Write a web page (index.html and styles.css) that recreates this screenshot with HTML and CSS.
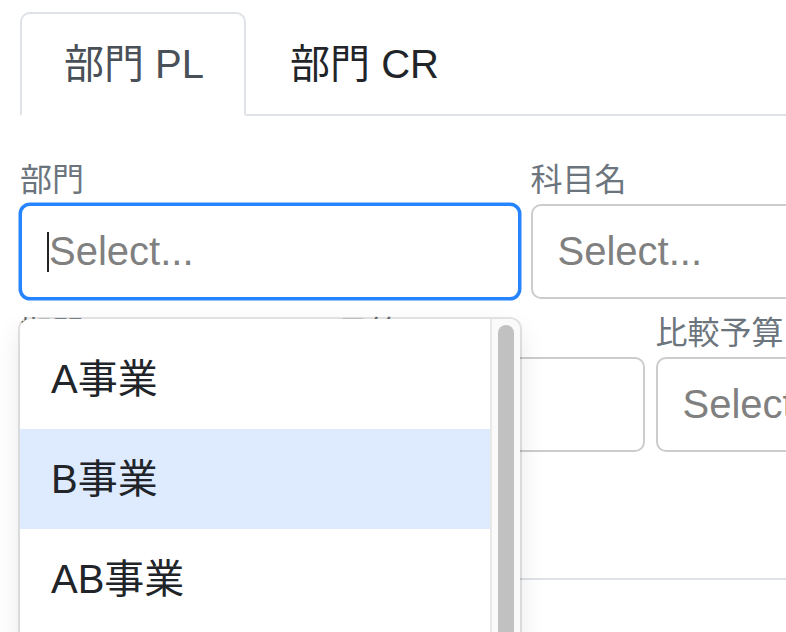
FILE: index.html
```html
<!DOCTYPE html>
<html lang="ja">
<head>
<meta charset="utf-8">
<title>部門 PL</title>
<link rel="stylesheet" href="styles.css">
</head>
<body>
<div class="page">
  <ul class="tabs">
    <li class="tab active">部門 PL</li>
    <li class="tab">部門 CR</li>
  </ul>
  <div class="form">
    <div class="row row1">
      <div class="field wide">
        <label class="label">部門</label>
        <div class="control focused"><span class="caret"></span><span class="ph">Select...</span></div>
        <div class="menu">
          <div class="menu-list">
            <div class="option">A事業</div>
            <div class="option hl">B事業</div>
            <div class="option">AB事業</div>
          </div>
          <div class="scroll"><div class="thumb"></div></div>
        </div>
      </div>
      <div class="field wide">
        <label class="label">科目名</label>
        <div class="control"><span class="ph">Select...</span></div>
      </div>
    </div>
    <div class="row row2">
      <div class="field narrow">
        <label class="label">期間</label>
        <div class="control"><span class="ph">Select...</span></div>
      </div>
      <div class="field narrow">
        <label class="label">予算</label>
        <div class="control"><span class="ph"></span></div>
      </div>
      <div class="field narrow">
        <label class="label">比較予算</label>
        <div class="control"><span class="ph">Select...</span></div>
      </div>
    </div>
    <div class="divider"></div>
  </div>
</div>
</body>
</html>
```
FILE: styles.css
```css
html, body {
  margin: 0;
  padding: 0;
  background: #ffffff;
}
body {
  font-family: "Liberation Sans", "Noto Sans CJK JP", sans-serif;
  color: #212529;
  overflow: hidden;
}
.page {
  width: 786px;
  height: 632px;
  overflow: hidden;
  padding: 12px 0 0 20px;
  box-sizing: border-box;
}
.tabs {
  list-style: none;
  margin: 0;
  padding: 0;
  display: flex;
  border-bottom: 2px solid #dee2e6;
  width: 1000px;
}
.tab {
  font-size: 40px;
  line-height: 60px;
  padding: 20px 40px 20px 42px;
  border: 2px solid transparent;
  border-top-left-radius: 10px;
  border-top-right-radius: 10px;
  margin-bottom: -2px;
  color: #212529;
}
.tab.active {
  color: #495057;
  border-color: #dee2e6 #dee2e6 #ffffff;
  background: #fff;
}
.form {
  padding-top: 41px;
}
.row {
  display: flex;
  gap: 10.5px;
  width: 1200px;
}
.row2 {
  margin-top: 11px;
}
.field {
  position: relative;
  flex: none;
  display: flex;
  flex-direction: column;
}
.wide { width: 500px; }
.narrow { width: 307.25px; }
.label {
  font-size: 32px;
  line-height: 44px;
  padding-top: 1px;
  color: #6c757d;
  margin-bottom: 2px;
  white-space: nowrap;
}
.control {
  height: 95px;
  box-sizing: border-box;
  border: 2px solid #cccccc;
  border-radius: 10px;
  display: flex;
  align-items: center;
  padding-left: 25px;
  background: #fff;
}
.control.focused {
  border: 2px solid #2684ff;
  box-shadow: 0 0 0 1.5px #2684ff;
  padding-left: 25px;
}
.ph {
  font-size: 40px;
  color: #808080;
  white-space: nowrap;
}
.caret {
  width: 2px;
  height: 40px;
  background: #222;
  margin-right: 0;
}
.menu {
  position: absolute;
  left: 0;
  top: calc(100% + 20px);
  width: 500px;
  height: 360px;
  background: #fff;
  border-radius: 10px;
  box-shadow: 0 0 0 2px rgba(0, 0, 0, 0.1), 0 10px 27px rgba(0, 0, 0, 0.1);
  display: flex;
  overflow: hidden;
  z-index: 5;
}
.menu-list {
  flex: 1;
  padding-top: 10px;
}
.option {
  height: 100px;
  padding-left: 31px;
  padding-bottom: 6px;
  box-sizing: border-box;
  font-size: 40px;
  color: #212529;
  display: flex;
  align-items: center;
}
.option.hl {
  background: #deebff;
}
.scroll {
  width: 30px;
  flex: none;
  background: #fafafa;
  border-left: 2px solid #e8e8e8;
  padding: 6px 0 0 6px;
  box-sizing: border-box;
}
.thumb {
  width: 16px;
  height: 400px;
  background: #c1c1c1;
  border-radius: 8px;
}
.divider {
  margin-top: 126px;
  border-top: 2px solid #dee2e6;
  width: 1000px;
}
```
